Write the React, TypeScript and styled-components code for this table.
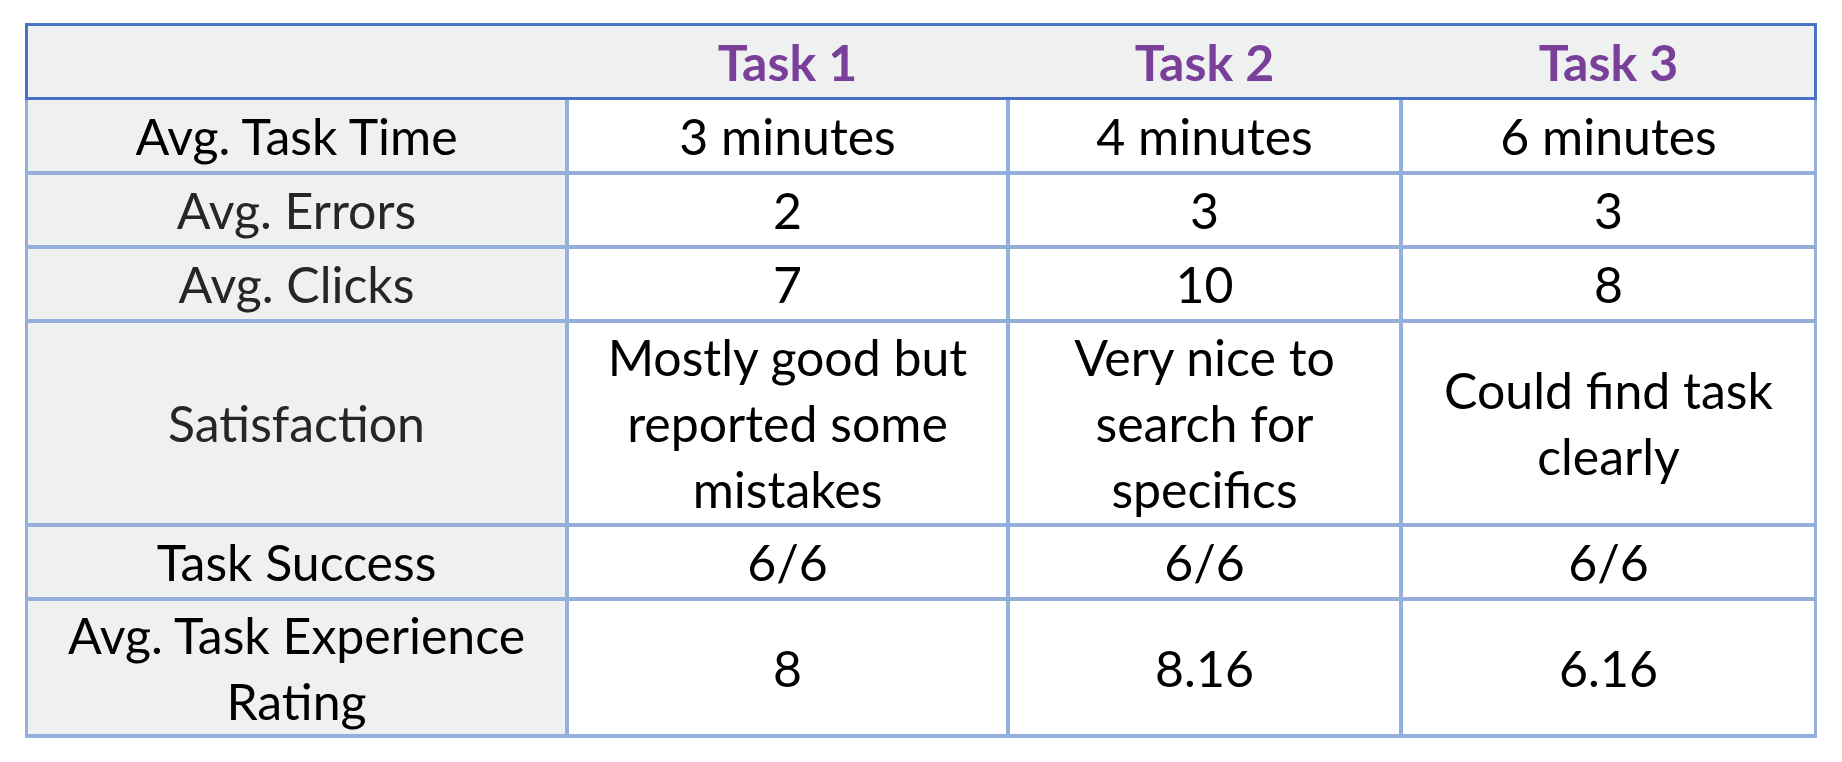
import React from 'react';
import styled, { createGlobalStyle } from 'styled-components';

const GlobalStyle = createGlobalStyle`
    html, body {
        margin: 0;
        padding: 0;
        background: #ffffff;
    }
    body {
        font-family: Lato, 'Open Sans', 'Liberation Sans', sans-serif;
    }
`;

const COLUMNS = '537px 437px 389px 411px';

const Page = styled.div`
    padding: 23px 0 0 25px;
    width: 1792px;
`;

const HeaderRow = styled.div`
    display: grid;
    grid-template-columns: ${COLUMNS};
    column-gap: 4px;
    height: 71px;
    background: #eff1f0;
    border: 3px solid #4a72c4;
`;

const HeadCell = styled.div`
    display: flex;
    align-items: center;
    justify-content: center;
    font-size: 50px;
    font-weight: 700;
    color: #7a3f98;
`;

const Body = styled.div`
    display: grid;
    grid-template-columns: ${COLUMNS};
    grid-auto-rows: auto;
    gap: 4px;
    padding: 0 3px 4px 3px;
    background: #95afdc;
`;

const Cell = styled.div<{ $label?: boolean; $muted?: boolean; $h: number }>`
    display: flex;
    align-items: center;
    justify-content: center;
    text-align: center;
    height: ${(p) => p.$h}px;
    background: ${(p) => (p.$label ? '#eff1f0' : '#ffffff')};
    color: ${(p) => (p.$muted ? '#262626' : '#000000')};
    font-size: 50px;
    line-height: 66px;
`;

const rows: { label: string; muted?: boolean; h: number; values: string[] }[] = [
    { label: 'Avg. Task Time', h: 71, values: ['3 minutes', '4 minutes', '6 minutes'] },
    { label: 'Avg. Errors', muted: true, h: 70, values: ['2', '3', '3'] },
    { label: 'Avg. Clicks', muted: true, h: 70, values: ['7', '10', '8'] },
    {
        label: 'Satisfaction',
        muted: true,
        h: 200,
        values: ['Mostly good but\nreported some\nmistakes', 'Very nice to\nsearch for\nspecifics', 'Could find task\nclearly'],
    },
    { label: 'Task Success', h: 70, values: ['6/6', '6/6', '6/6'] },
    { label: 'Avg. Task Experience\nRating', h: 133, values: ['8', '8.16', '6.16'] },
];

const Lines = ({ text }: { text: string }) => (
    <span>
        {text.split('\n').map((line, i) => (
            <React.Fragment key={i}>
                {i > 0 && <br />}
                {line}
            </React.Fragment>
        ))}
    </span>
);

export default function App() {
    return (
        <>
            <GlobalStyle />
            <Page>
                <HeaderRow>
                    <HeadCell />
                    <HeadCell>Task 1</HeadCell>
                    <HeadCell>Task 2</HeadCell>
                    <HeadCell>Task 3</HeadCell>
                </HeaderRow>
                <Body>
                    {rows.map((row) => (
                        <React.Fragment key={row.label}>
                            <Cell $label $muted={row.muted} $h={row.h}>
                                <Lines text={row.label} />
                            </Cell>
                            {row.values.map((v, i) => (
                                <Cell key={i} $h={row.h}>
                                    <Lines text={v} />
                                </Cell>
                            ))}
                        </React.Fragment>
                    ))}
                </Body>
            </Page>
        </>
    );
}
